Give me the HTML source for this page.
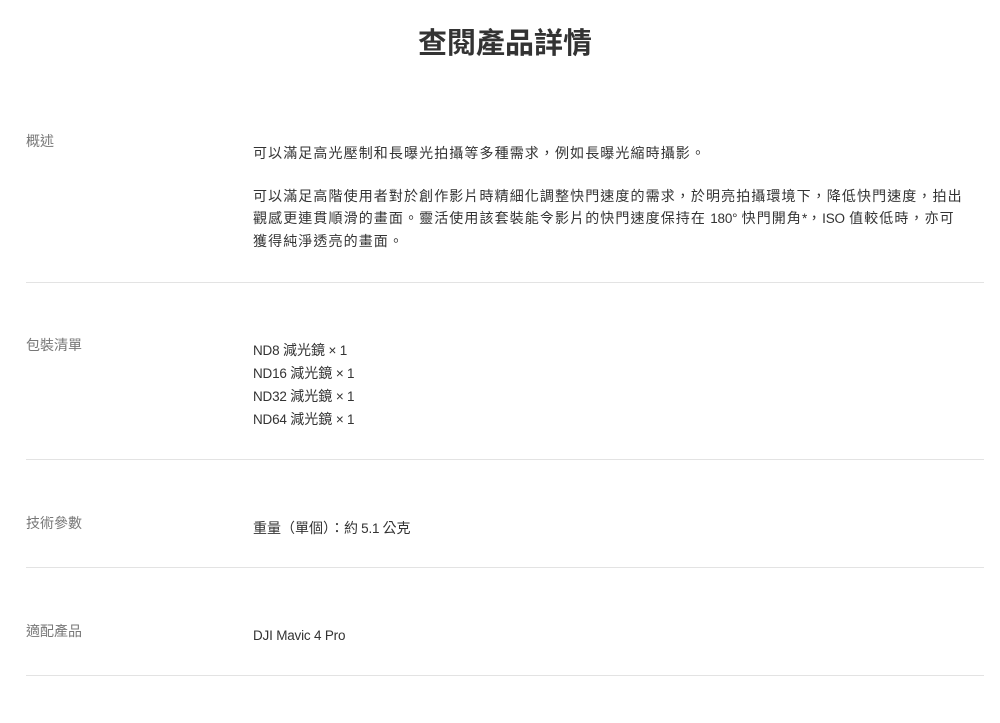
<!DOCTYPE html>
<html><head><meta charset="utf-8"><style>
body{margin:0;width:1000px;height:723px;background:#fff;font-family:"Liberation Sans","Noto Sans CJK TC",sans-serif;color:#333;position:relative;overflow:hidden}
h1{position:absolute;left:0;width:1010px;text-align:center;top:22px;margin:0;font-size:29px;font-weight:bold;color:#333;line-height:38px;font-family:"Noto Sans CJK TC",sans-serif}
.l{position:absolute;left:26px;font-size:14px;color:#777;line-height:20px;font-family:"Noto Sans CJK TC",sans-serif}
.c{position:absolute;left:253px;font-size:14px;color:#333;line-height:22px;white-space:nowrap;letter-spacing:1.1px;font-family:"Noto Sans CJK TC",sans-serif}
.c b{font-weight:normal;font-family:"Liberation Sans",sans-serif;font-size:13.5px;letter-spacing:-0.2px}
.hr{position:absolute;left:26px;width:958px;height:1px;background:#e3e3e3}
</style></head><body>
<h1>查閱產品詳情</h1>
<div class="l" style="top:131px">概述</div>
<div class="c" style="top:142px">可以滿足高光壓制和長曝光拍攝等多種需求，例如長曝光縮時攝影。</div>
<div class="c" style="top:185px">可以滿足高階使用者對於創作影片時精細化調整快門速度的需求，於明亮拍攝環境下，降低快門速度，拍出<br>觀感更連貫順滑的畫面。靈活使用該套裝能令影片的快門速度保持在 <b>180°</b> 快門開角<b>*</b>，<b>ISO</b> 值較低時，亦可<br>獲得純淨透亮的畫面。</div>
<div class="hr" style="top:282px"></div>
<div class="l" style="top:335px">包裝清單</div>
<div class="c" style="top:339px;letter-spacing:0"><b>ND8 </b>減光鏡<b> × 1</b><br><b>ND16 </b>減光鏡<b> × 1</b><br><b>ND32 </b>減光鏡<b> × 1</b><br><b>ND64 </b>減光鏡<b> × 1</b></div>
<div class="hr" style="top:459px"></div>
<div class="l" style="top:513px">技術參數</div>
<div class="c" style="top:517px;letter-spacing:0">重量（單個）：約 <b>5.1</b> 公克</div>
<div class="hr" style="top:567px"></div>
<div class="l" style="top:621px">適配產品</div>
<div class="c" style="top:624px;letter-spacing:0"><b>DJI Mavic 4 Pro</b></div>
<div class="hr" style="top:675px"></div>
</body></html>
